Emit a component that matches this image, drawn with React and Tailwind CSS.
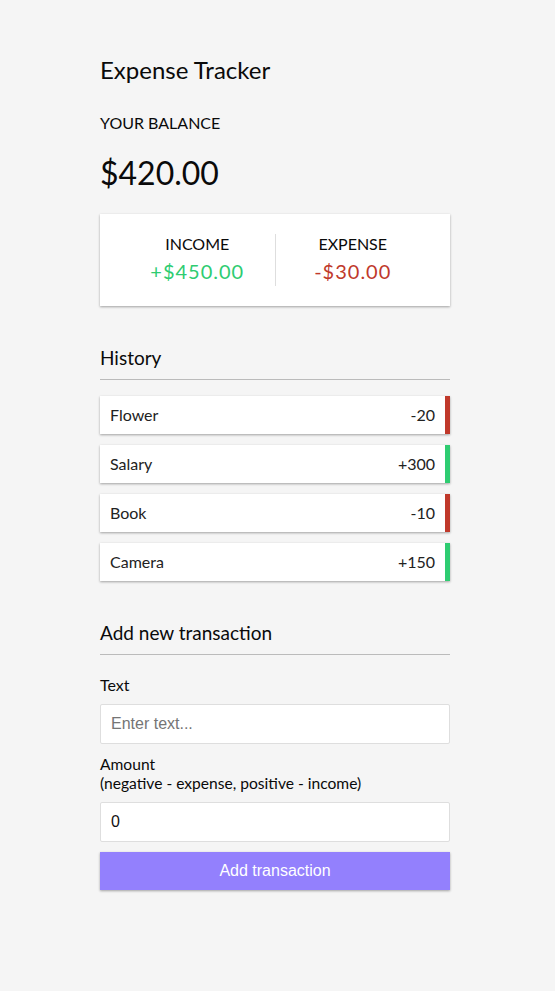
import React from "react";

const transactions = [
  { id: 1, text: "Flower", amount: -20 },
  { id: 2, text: "Salary", amount: 300 },
  { id: 3, text: "Book", amount: -10 },
  { id: 4, text: "Camera", amount: 150 },
];

const shadow = "shadow-[0_1px_3px_rgba(0,0,0,0.12),0_1px_2px_rgba(0,0,0,0.24)]";

export default function App() {
  return (
    <div className="min-h-screen bg-[#f5f5f5] font-['Lato',sans-serif] text-[#0a0a0a]">
      <div className="ml-[100px] w-[350px] pt-[56px] pb-[60px]">
        {/* Header */}
        <h2 className="text-[24px] leading-[28px]">Expense Tracker</h2>

        {/* Balance */}
        <h4 className="mt-[29px] text-[16px] leading-[20px] uppercase">Your Balance</h4>
        <h1 className="mt-[21px] text-[32px] leading-[38px]">$420.00</h1>

        {/* Income / Expense */}
        <div className={`mt-[22px] flex bg-white p-5 ${shadow}`}>
          <div className="flex-1 h-[52px] text-center border-r border-[#dedede]">
            <h4 className="text-[16px] leading-[20px] uppercase">Income</h4>
            <p className="mt-[5px] text-[20px] leading-[24px] tracking-[1px] text-[#2ecc71]">+$450.00</p>
          </div>
          <div className="flex-1 h-[52px] text-center">
            <h4 className="text-[16px] leading-[20px] uppercase">Expense</h4>
            <p className="mt-[5px] text-[20px] leading-[24px] tracking-[1px] text-[#c0392b]">-$30.00</p>
          </div>
        </div>

        {/* History */}
        <h3 className="mt-[41px] border-b border-[#bbb] pb-[10px] text-[19px] leading-[22px]">History</h3>
        <ul className="mt-[16px] flex flex-col gap-[11px]">
          {transactions.map((t) => (
            <li
              key={t.id}
              className={`flex h-[38px] items-center justify-between bg-white px-[10px] text-[16px] text-[#222] border-r-[5px] ${
                t.amount < 0 ? "border-[#c0392b]" : "border-[#2ecc71]"
              } ${shadow}`}
            >
              <span>{t.text}</span>
              <span>{t.amount < 0 ? "-" : "+"}{Math.abs(t.amount)}</span>
            </li>
          ))}
        </ul>

        {/* Add new transaction */}
        <h3 className="mt-[41px] border-b border-[#bbb] pb-[10px] text-[19px] leading-[22px]">Add new transaction</h3>
        <form onSubmit={(e) => e.preventDefault()}>
          <label className="mt-[20px] block text-[16px] leading-[20px]">Text</label>
          <input
            type="text"
            placeholder="Enter text..."
            className="mt-[9px] block h-[40px] w-full rounded-[2px] border border-[#dedede] bg-white px-[10px] font-['Liberation_Sans',Arial,sans-serif] text-[16px] text-[#111] placeholder:text-[#757575] outline-none"
          />
          <label className="mt-[11px] block text-[15.6px] leading-[19px]">
            Amount <br />
            (negative - expense, positive - income)
          </label>
          <input
            type="number"
            defaultValue="0"
            className="mt-[9px] block h-[40px] w-full rounded-[2px] border border-[#dedede] bg-white px-[10px] font-['Liberation_Sans',Arial,sans-serif] text-[16px] text-[#111] outline-none"
          />
          <button
            className={`mt-[10px] block h-[38px] w-full bg-[#9380fd] font-['Liberation_Sans',Arial,sans-serif] text-[16px] text-white ${shadow}`}
          >
            Add transaction
          </button>
        </form>
      </div>
    </div>
  );
}
